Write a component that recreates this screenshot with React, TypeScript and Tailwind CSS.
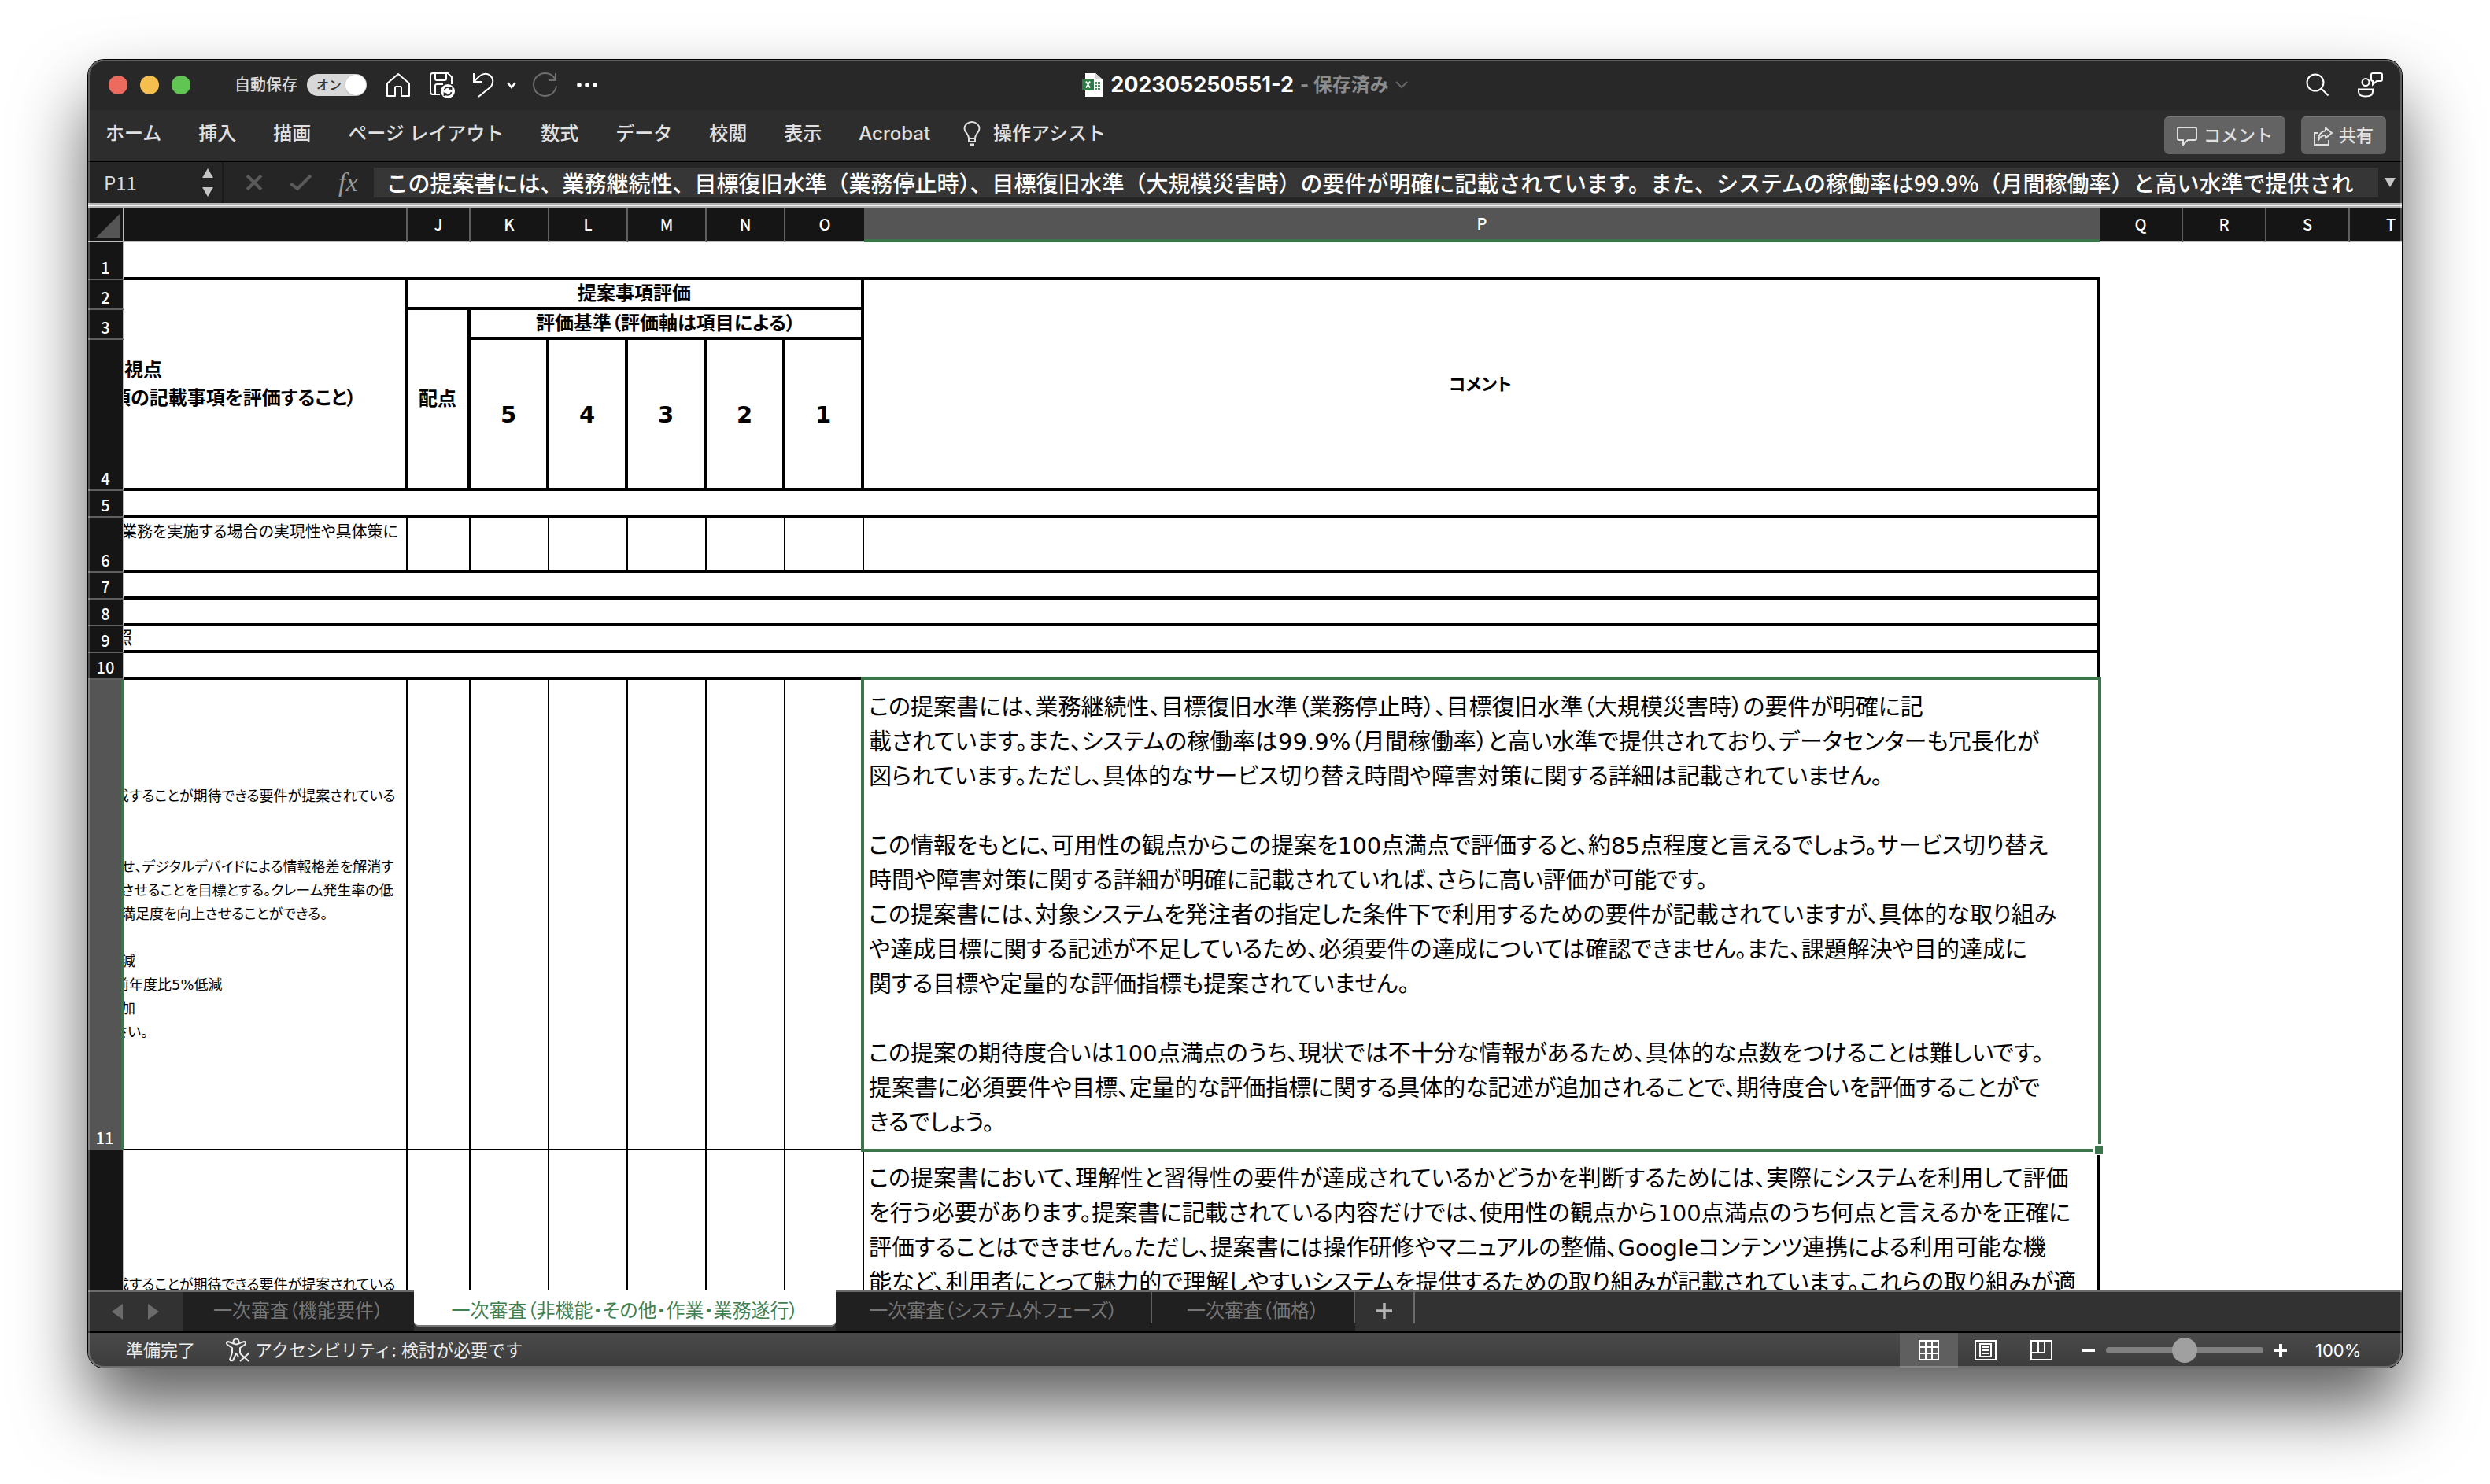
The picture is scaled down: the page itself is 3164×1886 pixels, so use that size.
import React, { useState } from 'react';
import { clsx } from 'clsx';

const UI_FONT = "font-['Inter','Noto_Sans_CJK_JP',sans-serif]";
const CELL_FONT = "font-['DejaVu_Sans','Noto_Sans_CJK_JP',sans-serif] [font-feature-settings:'palt']";

const MENU = ['ホーム', '挿入', '描画', 'ページ レイアウト', '数式', 'データ', '校閲', '表示', 'Acrobat'];

const COLUMNS = [
  { name: '', width: 'w-[360px]' },
  { name: 'J', width: 'w-[80px]' },
  { name: 'K', width: 'w-[100px]' },
  { name: 'L', width: 'w-[100px]' },
  { name: 'M', width: 'w-[100px]' },
  { name: 'N', width: 'w-[100px]' },
  { name: 'O', width: 'w-[100px]' },
  { name: 'P', width: 'w-[1570px]' },
  { name: 'Q', width: 'w-[106px]' },
  { name: 'R', width: 'w-[106px]' },
  { name: 'S', width: 'w-[106px]' },
  { name: 'T', width: 'w-[106px]' },
];

const FORMULA =
  'この提案書には、業務継続性、目標復旧水準（業務停止時）、目標復旧水準（大規模災害時）の要件が明確に記載されています。また、システムの稼働率は99.9%（月間稼働率）と高い水準で提供され';

const COMMENT_11 = [
  'この提案書には、業務継続性、目標復旧水準（業務停止時）、目標復旧水準（大規模災害時）の要件が明確に記',
  '載されています。また、システムの稼働率は99.9%（月間稼働率）と高い水準で提供されており、データセンターも冗長化が',
  '図られています。ただし、具体的なサービス切り替え時間や障害対策に関する詳細は記載されていません。',
  '',
  'この情報をもとに、可用性の観点からこの提案を100点満点で評価すると、約85点程度と言えるでしょう。サービス切り替え',
  '時間や障害対策に関する詳細が明確に記載されていれば、さらに高い評価が可能です。',
  'この提案書には、対象システムを発注者の指定した条件下で利用するための要件が記載されていますが、具体的な取り組み',
  'や達成目標に関する記述が不足しているため、必須要件の達成については確認できません。また、課題解決や目的達成に',
  '関する目標や定量的な評価指標も提案されていません。',
  '',
  'この提案の期待度合いは100点満点のうち、現状では不十分な情報があるため、具体的な点数をつけることは難しいです。',
  '提案書に必須要件や目標、定量的な評価指標に関する具体的な記述が追加されることで、期待度合いを評価することがで',
  'きるでしょう。',
];

const COMMENT_12 = [
  'この提案書において、理解性と習得性の要件が達成されているかどうかを判断するためには、実際にシステムを利用して評価',
  'を行う必要があります。提案書に記載されている内容だけでは、使用性の観点から100点満点のうち何点と言えるかを正確に',
  '評価することはできません。ただし、提案書には操作研修やマニュアルの整備、Googleコンテンツ連携による利用可能な機',
  '能など、利用者にとって魅力的で理解しやすいシステムを提供するための取り組みが記載されています。これらの取り組みが適',
];

// column I is scrolled halfway out, so most lines start with a cut glyph
const VIEWPOINT_11 = [
  { text: '成することが期待できる要件が提案されている', cut: true },
  { text: '', cut: false },
  { text: '', cut: false },
  { text: 'せ、デジタルデバイドによる情報格差を解消す', cut: false },
  { text: 'させることを目標とする。クレーム発生率の低', cut: false },
  { text: '満足度を向上させることができる。', cut: false },
  { text: '', cut: false },
  { text: '減', cut: false },
  { text: '前年度比5%低減', cut: true },
  { text: '加', cut: false },
  { text: 'さい。', cut: true },
];

const SHEETS = [
  { name: '一次審査（機能要件）', width: 'w-[294px]' },
  { name: '一次審査（非機能・その他・作業・業務遂行）', width: 'w-[536px]' },
  { name: '一次審査（システム外フェーズ）', width: 'w-[402px]' },
  { name: '一次審査（価格）', width: 'w-[258px]' },
];

const stroke = { fill: 'none', stroke: 'currentColor', strokeWidth: 2 };

const HomeIcon = () => (
  <svg className="h-8 w-8" viewBox="0 0 32 32" {...stroke} strokeLinejoin="round">
    <path d="M2 14 16 2l14 12v16H20V19.500q0-1.500-1.500-1.500h-5q-1.500 0-1.500 1.500V30H2z" />
  </svg>
);

const SaveIcon = () => (
  <svg className="h-9 w-9" viewBox="0 0 36 36" {...stroke}>
    <path d="M15 30H6q-3 0-3-3V6q0-3 3-3h19l5 5v9" />
    <path d="M9 3v7q0 2 2 2h10q2 0 2-2V3M9 30V19q0-2 2-2h8" />
    <circle cx="25" cy="26" r="9" fill="#fff" stroke="none" />
    <path d="M20.500 25q1-4 5-4 2.500 0 4 2v-3m0 3h-3M29.500 27q-1 4-5 4-2.500 0-4-2v3m0-3h3" stroke="#282828" strokeWidth="1.700" />
  </svg>
);

const UndoIcon = () => (
  <svg className="h-8 w-7" viewBox="0 0 28 32" {...stroke}>
    <path d="M2 1v11h11" />
    <path d="M2 12 9 5q7-6 14-1 6 6 1 14L8 31" />
  </svg>
);

const RedoIcon = () => (
  <svg className="h-8 w-8" viewBox="0 0 32 32" {...stroke}>
    <path d="M30 1v9h-9" />
    <path d="M30 10A14.500 14.500 0 1 0 31 17" />
  </svg>
);

const ExcelFileIcon = () => (
  <svg className="h-[30px] w-[26px]" viewBox="0 0 26 30">
    <path d="M4 0h13l9 8v22H4z" fill="#fff" />
    <path d="M17 0v8h9z" fill="#d5d5d5" />
    <path d="M16 11h3v3h-3zM20 11h3v3h-3zM16 15h3v3h-3zM20 15h3v3h-3zM16 19h3v2h-3zM20 19h3v2h-3z" fill="#3f9358" />
    <rect y="7" width="15" height="15" rx="1" fill="#2f7d46" />
    <path d="m5 10.500 5 8m0-8-5 8" stroke="#fff" strokeWidth="1.800" />
  </svg>
);

const SearchIcon = () => (
  <svg className="h-[30px] w-[30px]" viewBox="0 0 30 30" {...stroke}>
    <circle cx="12" cy="12" r="10.500" />
    <path d="m19.500 19.500 9 9" />
  </svg>
);

const PresenceIcon = () => (
  <svg className="h-8 w-8" viewBox="0 0 32 32" {...stroke}>
    <circle cx="10" cy="12.500" r="4.500" />
    <path d="M1 21.500h18v3q0 6-9 6t-9-6z" />
    <path d="M19 1h10q2 0 2 2v6q0 2-2 2h-5l-5 4.500V11q-2 0-2-2V3q0-2 2-2z" />
  </svg>
);

const BulbIcon = () => (
  <svg className="h-8 w-[22px]" viewBox="0 0 22 32" {...stroke}>
    <path d="M7 22q0-3-2.500-6.500Q1.500 12 1.500 9.500a9.500 8.500 0 0 1 19 0q0 2.500-3 6Q15 19 15 22zM7 22v4h8v-4" />
    <path d="M8 30h6" strokeWidth="3" />
  </svg>
);

const CommentIcon = () => (
  <svg className="h-6 w-[26px]" viewBox="0 0 26 24" {...stroke}>
    <path d="M3 1h20q2 0 2 2v12q0 2-2 2H14l-6 6v-6H3q-2 0-2-2V3q0-2 2-2z" />
  </svg>
);

const ShareIcon = () => (
  <svg className="h-6 w-6" viewBox="0 0 24 24" {...stroke}>
    <path d="M5 8H1v15h18v-6" />
    <path d="M15 1.500 23 8l-8 6.500V11q-6 0-9 6 0-10 9-12z" strokeLinejoin="round" />
  </svg>
);

const AccessibilityIcon = () => (
  <svg className="h-8 w-8" viewBox="0 0 32 32" {...stroke}>
    <circle cx="14" cy="5" r="3.500" />
    <path d="M17 8q5-3 8-3 2 2 0 4l-6 4v6M11 8Q6 5 3 5 1 7 3 9l6 4v6L6 28q1 2 4 1l4-9 3 4" strokeLinejoin="round" />
    <path d="m19 20 11 10m0-10L19 30" />
  </svg>
);

const GridViewIcon = () => (
  <svg className="h-[26px] w-[26px]" viewBox="0 0 26 26" {...stroke}>
    <path d="M1 1h24v24H1zM1 9h24M1 17h24M9 1v24M17 1v24" />
  </svg>
);

const PageViewIcon = () => (
  <svg className="h-[26px] w-7" viewBox="0 0 28 26" {...stroke}>
    <path d="M1 1h26v24H1zM7 5h14v16H7zM10 9h8M10 13h8M10 17h8" />
  </svg>
);

const BreakViewIcon = () => (
  <svg className="h-[26px] w-7" viewBox="0 0 28 26" {...stroke}>
    <path d="M1 1h26v24H1zM1 16h17V1M10 1v15" />
  </svg>
);

const TitleBar = () => {
  const [autosave, setAutosave] = useState(true);

  return (
    <header className="flex h-16 shrink-0 items-center bg-[#282828] px-6 text-white">
      <div className="flex flex-1 items-center">
        <div className="flex gap-4 pl-0.5">
          <button aria-label="閉じる" className="h-6 w-6 rounded-full bg-[#ed6a5e]" />
          <button aria-label="しまう" className="h-6 w-6 rounded-full bg-[#f4bf4f]" />
          <button aria-label="拡大" className="h-6 w-6 rounded-full bg-[#61c554]" />
        </div>
        <label className="ml-14 flex cursor-pointer items-center gap-3 text-[20px] font-medium text-[#dcdcdc]">
          自動保存
          <span className="flex h-7 w-[76px] items-center justify-between rounded-full bg-[#d8d8d8] pr-px pl-3 text-[16px] text-[#333]">
            オン
            <input
              type="checkbox"
              checked={autosave}
              onChange={() => setAutosave(!autosave)}
              className="h-[26px] w-[26px] appearance-none rounded-full bg-white shadow"
            />
          </span>
        </label>
        <div className="ml-6 flex items-center">
          <button aria-label="ホーム"><HomeIcon /></button>
          <button aria-label="保存" className="ml-[22px]"><SaveIcon /></button>
          <button aria-label="元に戻す" className="ml-5"><UndoIcon /></button>
          <button aria-label="元に戻す履歴" className="ml-4">
            <svg className="h-3 w-3" viewBox="0 0 12 12" fill="none" stroke="currentColor" strokeWidth="2.500">
              <path d="m1 3 5 6 5-6" />
            </svg>
          </button>
          <button aria-label="やり直し" className="ml-5 text-[#6e6e6e]"><RedoIcon /></button>
          <button aria-label="その他" className="ml-6">
            <svg className="h-2 w-7" viewBox="0 0 28 8" fill="currentColor">
              <circle cx="4" cy="4" r="2.800" />
              <circle cx="14" cy="4" r="2.800" />
              <circle cx="24" cy="4" r="2.800" />
            </svg>
          </button>
        </div>
      </div>
      <div className="flex items-center text-[27px] font-bold">
        <ExcelFileIcon />
        <h1 className="ml-2.5">202305250551-2</h1>
        <button className="ml-2 flex items-center gap-2 text-[24px] text-[#8c8c8c]">
          <span>- 保存済み</span>
          <svg className="h-3 w-4" viewBox="0 0 16 12" fill="none" stroke="#666" strokeWidth="2">
            <path d="m1 2 7 7 7-7" />
          </svg>
        </button>
      </div>
      <div className="flex flex-1 items-center justify-end gap-9">
        <button aria-label="検索"><SearchIcon /></button>
        <button aria-label="共同編集者"><PresenceIcon /></button>
      </div>
    </header>
  );
};

const Ribbon = () => (
  <nav className="flex h-[66px] shrink-0 items-center border-b-2 border-black bg-[#2d2d2d] pr-5 pl-[22px] text-[24px] text-[#e0e0e0]">
    <div className="flex items-center gap-[47px] pb-1">
      {MENU.map(item => (
        <button key={item} className="font-medium whitespace-nowrap">{item}</button>
      ))}
    </div>
    <button className="ml-[42px] flex items-center gap-4 pb-1 font-medium">
      <BulbIcon />
      操作アシスト
    </button>
    <div className="ml-auto flex gap-5 text-[22px] font-medium">
      <button className="flex h-12 items-center gap-2 rounded-md border-t border-[#7a7a7a] bg-[#636363] px-4">
        <CommentIcon />
        コメント
      </button>
      <button className="flex h-12 items-center gap-2 rounded-md border-t border-[#7a7a7a] bg-[#636363] px-4">
        <ShareIcon />
        共有
      </button>
    </div>
  </nav>
);

const FormulaBar = () => (
  <div className="shrink-0 bg-[#252525] font-['Noto_Sans_CJK_JP',sans-serif]">
    <div className="flex h-[52px] items-center">
      <div className="flex h-full w-[172px] items-center border-r-2 border-[#1a1a1a] pr-2.5 pl-5">
        <input aria-label="名前ボックス" defaultValue="P11" className="w-full min-w-0 bg-transparent text-[24px] text-[#dcdcdc]" />
        <button aria-label="名前の選択">
          <svg className="h-9 w-4" viewBox="0 0 16 36" fill="#c4c4c4">
            <path d="m8 0 7 12H1zM8 36 1 24h14z" />
          </svg>
        </button>
      </div>
      <div className="flex items-center gap-[34px] pr-5 pl-7 text-[#5a5a5a]">
        <button aria-label="キャンセル">
          <svg className="h-5 w-[22px]" viewBox="0 0 22 20" fill="none" stroke="currentColor" strokeWidth="4">
            <path d="m2 1 18 18M20 1 2 19" />
          </svg>
        </button>
        <button aria-label="入力">
          <svg className="h-5 w-7" viewBox="0 0 28 20" fill="none" stroke="currentColor" strokeWidth="4">
            <path d="m1 11 9 7L27 1" />
          </svg>
        </button>
        <button aria-label="関数の挿入" className="font-['Liberation_Serif',serif] text-[34px] leading-none text-[#9a9a9a] italic">
          fx
        </button>
      </div>
      <input
        aria-label="数式バー"
        defaultValue={FORMULA}
        className="h-[38px] min-w-0 flex-1 bg-[#363636] px-4 text-[28px] font-medium text-white"
      />
      <button aria-label="数式バーの展開" className="px-2">
        <svg className="h-3 w-[14px]" viewBox="0 0 14 12" fill="#c4c4c4">
          <path d="M0 0h14L7 12z" />
        </svg>
      </button>
    </div>
    <div className="h-1.5 border-y-2 border-[#b4b4b4] bg-[#f4f4f4]" />
  </div>
);

const RowHead = ({ n, height }: { n: number | string; height: string }) => {
  const active = n === 11;
  return (
    <th
      scope="row"
      className={clsx(
        "border-b-2 p-0 align-bottom font-['Noto_Sans_CJK_JP',sans-serif] text-[20px] leading-[28px] font-medium text-white",
        height,
        active ? 'border-r-4 border-r-[#3c754b] border-b-[#555] bg-[#555]' : 'border-r-2 border-r-[#bdbdbd] border-b-[#5f5f5f] bg-[#151515]'
      )}
    >
      {n}
    </th>
  );
};

// section rows that run across the whole form
const BandRow = ({ n, text }: { n: number; text?: string }) => (
  <tr>
    <RowHead n={n} height="h-[34px]" />
    <td colSpan={8} className="overflow-hidden border-r-4 border-b-4 border-black p-0">
      {text && <div className="-ml-3 text-[22px] leading-[28px]">{text}</div>}
    </td>
    <td colSpan={4} />
  </tr>
);

const ScoreCells = ({ border }: { border: string }) => (
  <>
    {['J', 'K', 'L', 'M', 'N', 'O'].map(col => (
      <td key={col} className={clsx('border-r-2 border-black', border)} />
    ))}
  </>
);

const CommentText = ({ lines }: { lines: string[] }) => (
  <div className="pl-1.5 text-[29px] leading-[44px] whitespace-nowrap">
    {lines.map((line, i) => (
      <p key={i} className="h-11">{line}</p>
    ))}
  </div>
);

const Sheet = () => (
  <main className="min-h-0 flex-1 overflow-hidden bg-white text-black">
    <table className={clsx('w-full table-fixed border-separate border-spacing-0', CELL_FONT)}>
      <colgroup>
        <col className="w-[46px]" />
        {COLUMNS.map(col => (
          <col key={col.name} className={col.width} />
        ))}
      </colgroup>
      <thead className="font-['Noto_Sans_CJK_JP',sans-serif] text-[20px] text-white">
        <tr>
          <th className="h-11 border-r-2 border-b-2 border-[#bdbdbd] bg-[#151515] p-0">
            <svg className="mt-1 ml-2.5 h-[30px] w-[30px]" viewBox="0 0 30 30" fill="#555">
              <path d="M30 0v30H0z" />
            </svg>
          </th>
          {COLUMNS.map(({ name }) => (
            <th
              key={name}
              scope="col"
              className={clsx(
                'h-11 p-0 font-medium',
                name === 'P' ? 'border-b-4 border-[#3c754b] bg-[#555]' : 'border-b-2 border-b-[#bdbdbd] bg-[#151515]',
                name !== 'P' && name !== 'O' && 'border-r-2 border-r-[#5f5f5f]'
              )}
            >
              {name}
            </th>
          ))}
        </tr>
      </thead>
      <tbody>
        <tr>
          <RowHead n={1} height="h-12" />
          <td colSpan={8} className="border-b-4 border-black" />
          <td colSpan={4} />
        </tr>
        <tr className="text-[24px] font-bold">
          <RowHead n={2} height="h-[38px]" />
          <td rowSpan={3} className="overflow-hidden border-r-4 border-b-4 border-black p-0 leading-9 whitespace-nowrap">
            <p>視点</p>
            <p className="-ml-4">項の記載事項を評価すること）</p>
          </td>
          <td colSpan={6} className="border-r-4 border-b-4 border-black p-0 text-center leading-[34px]">提案事項評価</td>
          <td rowSpan={3} className="border-r-4 border-b-4 border-black p-0 text-center text-[22px]">コメント</td>
          <td colSpan={4} />
        </tr>
        <tr className="text-[24px] font-bold">
          <RowHead n={3} height="h-[38px]" />
          <td rowSpan={2} className="border-r-4 border-b-4 border-black p-0 text-center">配点</td>
          <td colSpan={5} className="border-r-4 border-b-4 border-black p-0 text-center leading-[34px]">評価基準（評価軸は項目による）</td>
          <td colSpan={4} />
        </tr>
        <tr className="text-[29px] font-bold">
          <RowHead n={4} height="h-[192px]" />
          {[5, 4, 3, 2, 1].map(score => (
            <td key={score} className="border-r-4 border-b-4 border-black p-0 pt-1 text-center">{score}</td>
          ))}
          <td colSpan={4} />
        </tr>
        <BandRow n={5} />
        <tr>
          <RowHead n={6} height="h-[70px]" />
          <td className="overflow-hidden border-r-2 border-b-4 border-black p-0 align-top text-[20px] leading-9 whitespace-nowrap">
            <p className="-ml-1">業務を実施する場合の実現性や具体策に</p>
          </td>
          <ScoreCells border="border-b-4" />
          <td className="border-r-4 border-b-4 border-black" />
          <td colSpan={4} />
        </tr>
        <BandRow n={7} />
        <BandRow n={8} />
        <BandRow n={9} text="照" />
        <BandRow n={10} />
        <tr>
          <RowHead n={11} height="h-[598px]" />
          <td className="overflow-hidden border-r-2 border-b-2 border-black p-0 text-[18px] leading-[30px] whitespace-nowrap">
            {VIEWPOINT_11.map((line, i) => (
              <p key={i} className={clsx('h-[30px]', line.cut ? '-ml-3' : '-ml-1')}>{line.text}</p>
            ))}
          </td>
          <ScoreCells border="border-b-2" />
          <td className="relative p-0">
            <CommentText lines={COMMENT_11} />
            <div className="pointer-events-none absolute -top-1 -right-0.5 -bottom-0.5 -left-1 border-4 border-[#3c754b]" />
            <div className="absolute -right-1.5 -bottom-1.5 h-[14px] w-[14px] border-2 border-white bg-[#3c754b]" />
          </td>
          <td colSpan={4} />
        </tr>
        <tr>
          <RowHead n="" height="h-[342px]" />
          <td className="overflow-hidden border-r-2 border-black p-0 text-[18px] leading-[30px] whitespace-nowrap">
            <p className="-ml-3">成することが期待できる要件が提案されている</p>
          </td>
          <ScoreCells border="" />
          <td className="border-r-4 border-black p-0 pt-3.5 align-top">
            <CommentText lines={COMMENT_12} />
          </td>
          <td colSpan={4} />
        </tr>
      </tbody>
    </table>
  </main>
);

const SheetTabs = () => {
  const [active, setActive] = useState(1);

  return (
    <div className="flex h-[54px] shrink-0 border-t-2 border-b-2 border-t-[#6b6b6b] border-b-black bg-[#323232] font-['Noto_Sans_CJK_JP',sans-serif] text-[24px] [font-feature-settings:'palt']">
      <div className="flex w-[120px] items-center justify-center gap-8 text-[#6b6b6b]">
        <button aria-label="前のシート">
          <svg className="h-5 w-[14px]" viewBox="0 0 14 20" fill="currentColor"><path d="M14 0v20L0 10z" /></svg>
        </button>
        <button aria-label="次のシート">
          <svg className="h-5 w-[14px]" viewBox="0 0 14 20" fill="currentColor"><path d="m0 0 14 10L0 20z" /></svg>
        </button>
      </div>
      {SHEETS.map((sheet, i) => (
        <div key={sheet.name} className={clsx(sheet.width, i !== active && 'bg-[#202020]')}>
          <button
            onClick={() => setActive(i)}
            className={clsx(
              'w-full pt-1 whitespace-nowrap',
              i === active
                ? '-mt-0.5 h-[46px] rounded-b-md border-b-2 border-[#777] bg-white text-[#3f7f50]'
                : 'h-10 text-[#777]',
              i > active && 'border-r-2 border-[#5f5f5f]'
            )}
          >
            {sheet.name}
          </button>
        </div>
      ))}
      <button aria-label="シートの追加" className="flex h-10 w-[76px] items-center justify-center border-r-2 border-[#6b6b6b]">
        <svg className="mt-2 h-5 w-5" viewBox="0 0 20 20" stroke="#b5b5b5" strokeWidth="3.500">
          <path d="M10 0v20M0 10h20" />
        </svg>
      </button>
    </div>
  );
};

const StatusBar = () => {
  const [zoom, setZoom] = useState(100);

  return (
    <footer className="flex h-11 shrink-0 items-center bg-linear-to-b from-[#4a4a4a] to-[#3c3c3c] pl-12 text-[22px] text-[#ececec]">
      <span>準備完了</span>
      <button className="ml-[38px] flex items-center gap-1.5">
        <AccessibilityIcon />
        アクセシビリティ: 検討が必要です
      </button>
      <div className="ml-auto flex h-full items-center text-white">
        <button aria-label="標準" className="flex h-full w-[74px] items-center justify-center bg-[#5f5f5f]"><GridViewIcon /></button>
        <button aria-label="ページ レイアウト" className="flex w-[70px] justify-center"><PageViewIcon /></button>
        <button aria-label="改ページ プレビュー" className="flex w-[72px] justify-center"><BreakViewIcon /></button>
        <button aria-label="縮小" className="ml-4">
          <svg className="h-4 w-4" viewBox="0 0 16 16" stroke="currentColor" strokeWidth="4"><path d="M0 8h16" /></svg>
        </button>
        <input
          type="range"
          aria-label="ズーム"
          min={0}
          max={200}
          value={zoom}
          onChange={e => setZoom(Number(e.target.value))}
          className="mx-3.5 h-2 w-[200px] appearance-none rounded-full bg-[#808080] [&::-webkit-slider-thumb]:h-8 [&::-webkit-slider-thumb]:w-8 [&::-webkit-slider-thumb]:appearance-none [&::-webkit-slider-thumb]:rounded-full [&::-webkit-slider-thumb]:bg-[#a0a0a0]"
        />
        <button aria-label="拡大">
          <svg className="h-4 w-4" viewBox="0 0 16 16" stroke="currentColor" strokeWidth="4"><path d="M0 8h16M8 0v16" /></svg>
        </button>
        <output className="w-[146px] pl-9">{zoom}%</output>
      </div>
    </footer>
  );
};

export default function App() {
  return (
    <div className={clsx('h-screen overflow-hidden bg-white px-28 pt-[76px] pb-[148px]', UI_FONT)}>
      <div className="relative flex h-full flex-col overflow-hidden rounded-[20px] shadow-[0_0_0_1px_#000,0_50px_90px_rgba(0,0,0,0.64)]">
        <TitleBar />
        <Ribbon />
        <FormulaBar />
        <Sheet />
        <SheetTabs />
        <StatusBar />
        <div className="pointer-events-none absolute inset-0 rounded-[20px] border-2 border-white/25" />
      </div>
    </div>
  );
}
